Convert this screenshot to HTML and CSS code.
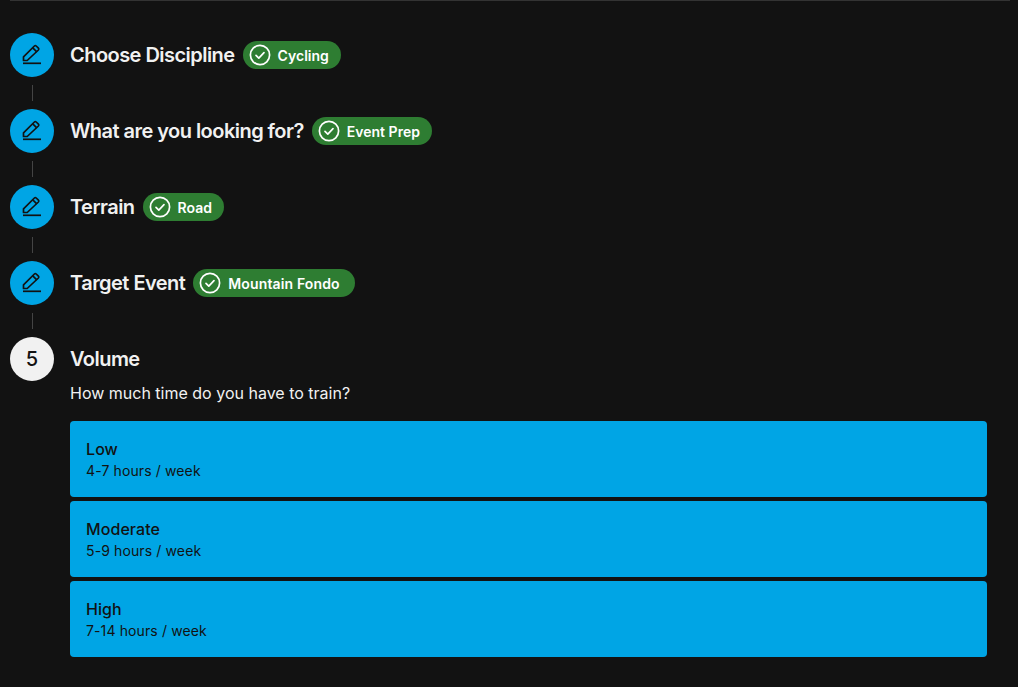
FILE: index.html
```html
<!DOCTYPE html>
<html lang="en">
<head>
<meta charset="utf-8">
<title>Training plan</title>
<link rel="stylesheet" href="styles.css">
</head>
<body>
<main class="page">
  <section class="stepper">
    <div class="step">
      <div class="circle done"><svg class="pen" viewBox="0 0 24 24"><path d="M3.5 17.5v-3.6L14.4 3a1.3 1.3 0 0 1 1.8 0l2.2 2.2a1.3 1.3 0 0 1 0 1.8L7.2 17.5z"/><path d="M12.8 4.8l4 4"/><path d="M3 20.3h18"/></svg></div>
      <h2 class="title">Choose Discipline</h2>
      <span class="badge"><svg class="check" viewBox="0 0 22 22"><circle cx="11" cy="11" r="9.6"/><path d="M7 11.3l2.8 2.8 5.2-5.4"/></svg>Cycling</span>
    </div>
    <div class="connector"></div>
    <div class="step">
      <div class="circle done"><svg class="pen" viewBox="0 0 24 24"><path d="M3.5 17.5v-3.6L14.4 3a1.3 1.3 0 0 1 1.8 0l2.2 2.2a1.3 1.3 0 0 1 0 1.8L7.2 17.5z"/><path d="M12.8 4.8l4 4"/><path d="M3 20.3h18"/></svg></div>
      <h2 class="title">What are you looking for?</h2>
      <span class="badge"><svg class="check" viewBox="0 0 22 22"><circle cx="11" cy="11" r="9.6"/><path d="M7 11.3l2.8 2.8 5.2-5.4"/></svg>Event Prep</span>
    </div>
    <div class="connector"></div>
    <div class="step">
      <div class="circle done"><svg class="pen" viewBox="0 0 24 24"><path d="M3.5 17.5v-3.6L14.4 3a1.3 1.3 0 0 1 1.8 0l2.2 2.2a1.3 1.3 0 0 1 0 1.8L7.2 17.5z"/><path d="M12.8 4.8l4 4"/><path d="M3 20.3h18"/></svg></div>
      <h2 class="title">Terrain</h2>
      <span class="badge"><svg class="check" viewBox="0 0 22 22"><circle cx="11" cy="11" r="9.6"/><path d="M7 11.3l2.8 2.8 5.2-5.4"/></svg>Road</span>
    </div>
    <div class="connector"></div>
    <div class="step">
      <div class="circle done"><svg class="pen" viewBox="0 0 24 24"><path d="M3.5 17.5v-3.6L14.4 3a1.3 1.3 0 0 1 1.8 0l2.2 2.2a1.3 1.3 0 0 1 0 1.8L7.2 17.5z"/><path d="M12.8 4.8l4 4"/><path d="M3 20.3h18"/></svg></div>
      <h2 class="title">Target Event</h2>
      <span class="badge badge-long"><svg class="check" viewBox="0 0 22 22"><circle cx="11" cy="11" r="9.6"/><path d="M7 11.3l2.8 2.8 5.2-5.4"/></svg>Mountain Fondo</span>
    </div>
    <div class="connector"></div>
    <div class="step">
      <div class="circle current">5</div>
      <h2 class="title">Volume</h2>
    </div>
    <div class="body">
      <p class="prompt">How much time do you have to train?</p>
      <div class="options">
        <div class="option"><div class="opt-name">Low</div><div class="opt-sub">4-7 hours / week</div></div>
        <div class="option"><div class="opt-name">Moderate</div><div class="opt-sub">5-9 hours / week</div></div>
        <div class="option"><div class="opt-name">High</div><div class="opt-sub">7-14 hours / week</div></div>
      </div>
    </div>
  </section>
</main>
</body>
</html>
```
FILE: styles.css
```css
* { box-sizing: border-box; }
html, body { margin: 0; height: 100%; }
body {
  background: #121212;
  color: #f1f1f1;
  font-family: Inter, "Liberation Sans", sans-serif;
  overflow: hidden;
}
.page {
  margin: 0 8px 0 10px;
  padding-top: 32px;
  border-top: 1px solid #333;
  height: 100%;
}
.step {
  display: flex;
  align-items: center;
  height: 44px;
}
.circle {
  width: 44px;
  height: 44px;
  border-radius: 50%;
  display: flex;
  align-items: center;
  justify-content: center;
  flex: none;
  margin-right: 16px;
}
.done { background: #00a5e5; }
.current {
  background: #f1f1f1;
  color: #121212;
  font-size: 20px;
  font-weight: 500;
}
.pen {
  width: 24px;
  height: 24px;
  fill: none;
  stroke: #121212;
  stroke-width: 1.7;
  stroke-linejoin: round;
  stroke-linecap: butt;
}
.title {
  margin: 0;
  font-size: 20px;
  font-weight: 600;
  line-height: 28px;
  letter-spacing: -0.54px;
  color: #f1f1f1;
}
.badge {
  display: inline-flex;
  align-items: center;
  height: 28px;
  margin-left: 8px;
  padding: 0 12px 0 6px;
  border-radius: 14px;
  background: #2e7d32;
  color: #fff;
  font-size: 14px;
  font-weight: 600;
  letter-spacing: 0.02px;
}
.badge-long {
  padding-right: 15px;
  letter-spacing: 0.14px;
}
.check {
  width: 22px;
  height: 22px;
  margin-right: 7px;
  fill: none;
  stroke: #fff;
  stroke-width: 1.7;
  stroke-linecap: round;
  stroke-linejoin: round;
}
.connector {
  width: 1px;
  height: 16px;
  margin: 8px 0 8px 22px;
  background: #444;
}
.body { margin-left: 60px; margin-right: 23px; }
.prompt {
  margin: 0;
  font-size: 16px;
  line-height: 24px;
  color: #f1f1f1;
}
.options {
  display: flex;
  flex-direction: column;
  gap: 4px;
  margin-top: 16px;
}
.option {
  height: 76px;
  padding: 16px;
  border-radius: 4px;
  background: #00a5e5;
  color: #121212;
}
.opt-name { font-size: 16px; font-weight: 550; line-height: 24px; letter-spacing: 0.08px; }
.opt-sub { font-size: 14px; line-height: 20px; letter-spacing: 0.12px; }
```
